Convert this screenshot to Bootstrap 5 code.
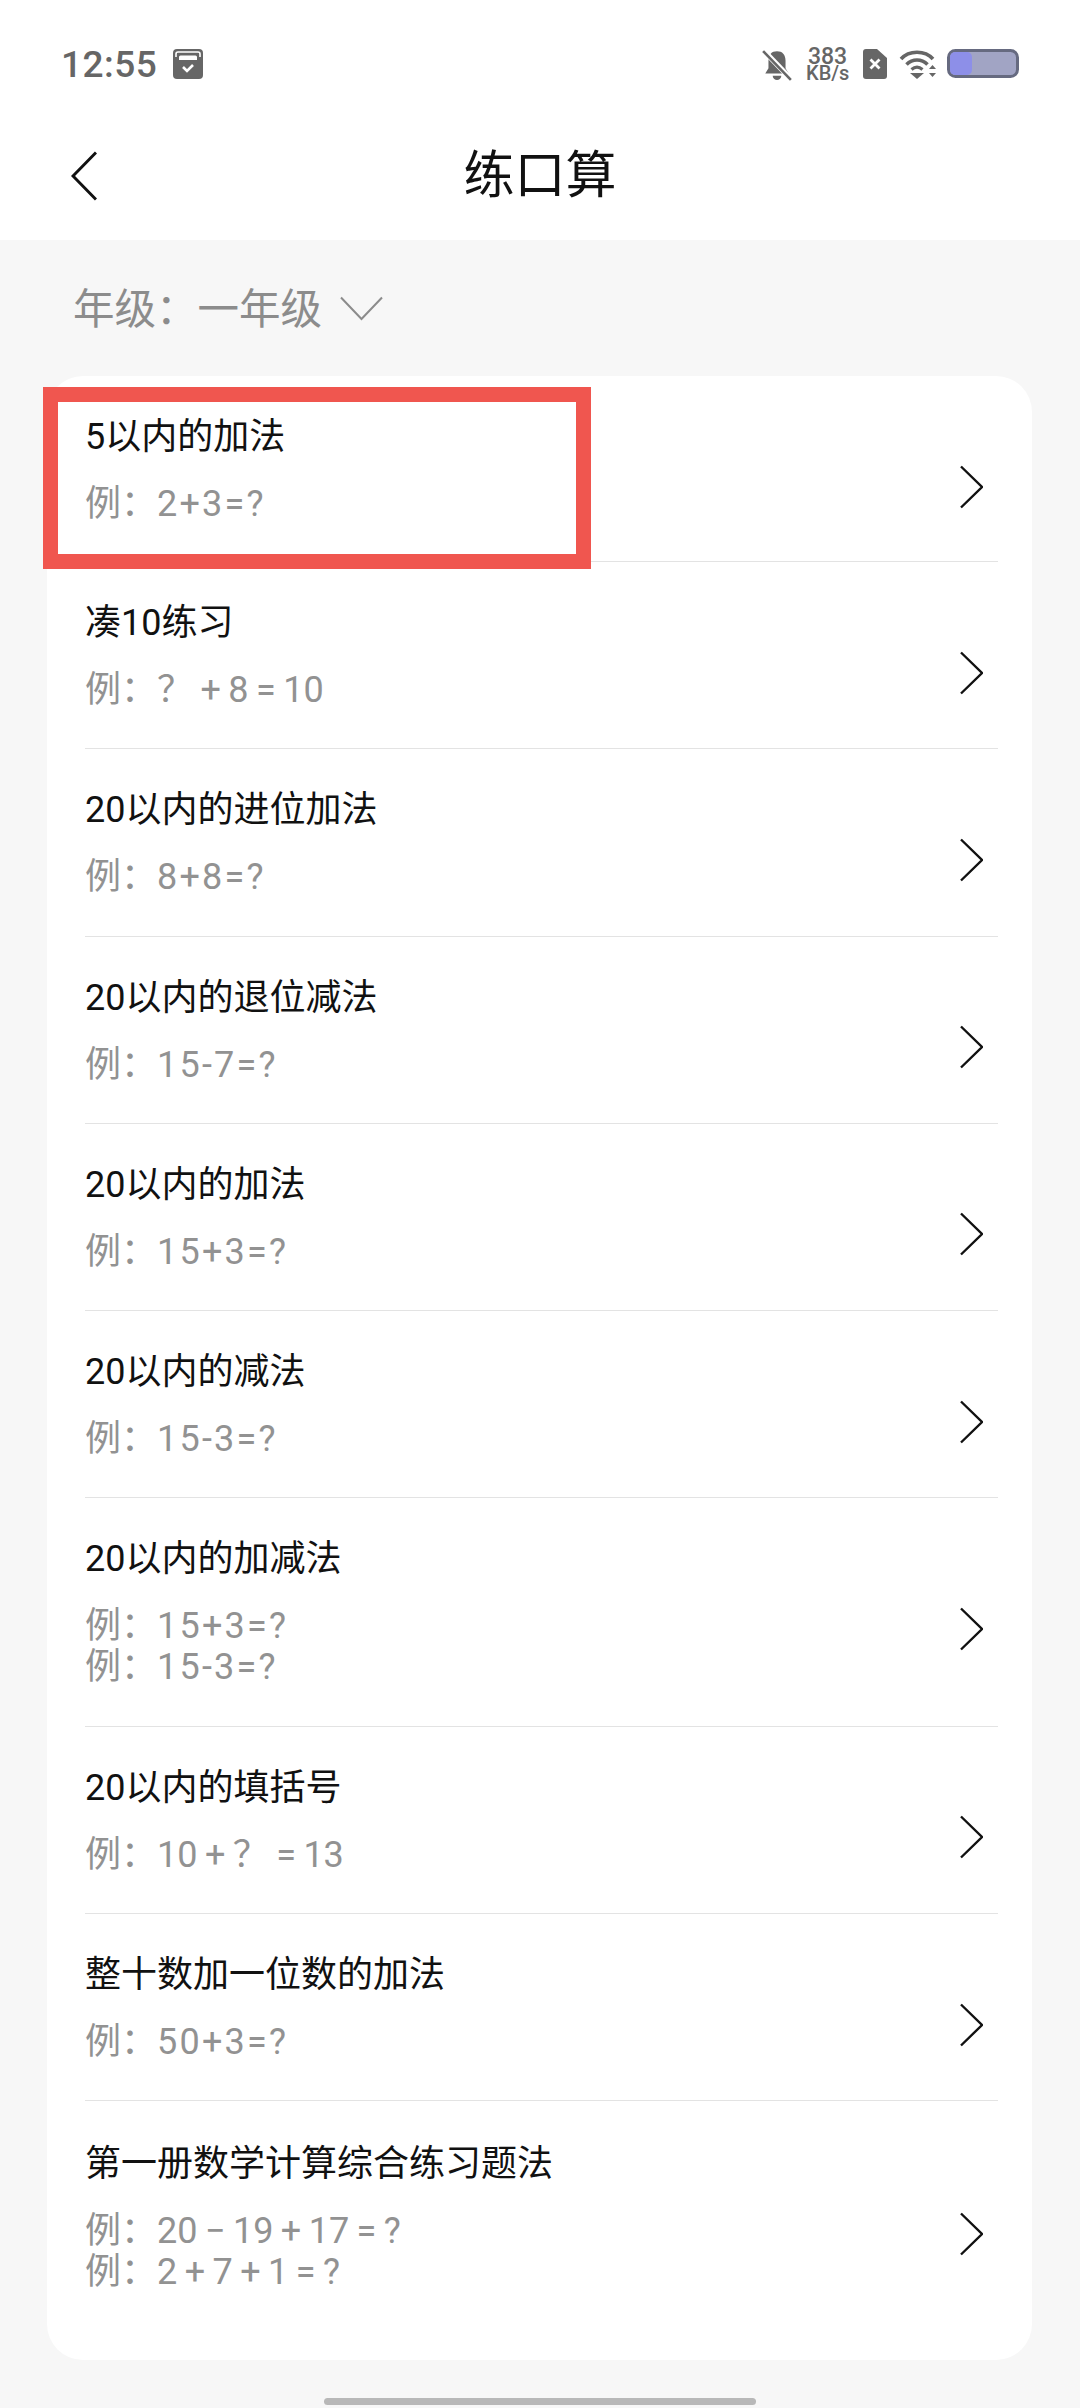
<!DOCTYPE html>
<html lang="zh">
<head>
  <meta charset="UTF-8">
  <meta name="viewport" content="width=device-width, initial-scale=1.0">
  <title>练口算</title>
  <link href="https://cdn.jsdelivr.net/npm/bootstrap@5.3.3/dist/css/bootstrap.min.css" rel="stylesheet">
  <style>
    body { width: 1080px; height: 2408px; overflow: hidden; background: #f7f7f7; font-family: Roboto, "Noto Sans CJK SC", sans-serif; }
    .top-area { height: 240px; background: #fff; }
    .status-row { height: 130px; padding: 49px 61px 0 61px; color: #666; }
    .clock { font-size: 37px; font-weight: 500; line-height: 32px; letter-spacing: .5px; }
    .speed { width: 43px; font-size: 20px; line-height: 17px; font-weight: 500; text-align: center; margin: -1px 14px 0 14px; white-space: nowrap; }
    .speed-top { font-size: 23px; }
    .wifi-icon { margin: 0 10px 0 12px; }
    .head-row { height: 90px; padding: 0 71px; margin-top: 1px; }
    .head-title { font-size: 51px; line-height: 60px; color: #111; }
    .head-side { width: 26px; }
    .grade-row { height: 136px; padding: 5px 0 0 73px; color: #8c8c8c; font-size: 41.5px; }
    .grade-arrow { margin: -4px 0 0 18px; }
    .practice-box { margin-left: 47px; width: 985px; height: 1984px; background: #fff; border-radius: 36px; }
    .practice-row { margin: 0 34px 0 38px; padding: 36px 15px 37.3px 0; border: 0; border-bottom: 1px solid #e3e3e3; border-radius: 0; background: transparent; }
    .practice-row:first-child { padding-bottom: 36px; }
    .practice-row:last-child { border-bottom: 0; padding-top: 38px; }
    .row-title { font-size: 36px; line-height: 50px; color: #111; }
    .row-sub { font-size: 36px; line-height: 41px; color: #929292; margin-top: 22px; }
    .row-sub .packed { letter-spacing: 2.2px; }
    .row-sub .spaced { word-spacing: -1.5px; }
    .row-arrow { margin-top: 36px; flex: none; }
    .red-frame { left: -4px; top: 11px; width: 548px; height: 182px; border: 15px solid #f0564f; }
    .home-bar { width: 432px; height: 7px; margin: 38px auto 0; background: #b8b8b8; border-radius: 4px; }
  </style>
</head>
<body>
  <!-- 顶部 -->
  <div class="top-area">
    <div class="status-row d-flex align-items-start">
      <span class="clock">12:55</span>
      <svg class="ms-3" width="30" height="30" viewBox="0 0 30 30">
        <rect x="0" y="0" width="30" height="30" rx="4" fill="#666"/>
        <path d="M3 8V5q0-2 2-2h20q2 0 2 2v3" fill="none" stroke="#fff" stroke-width="1.6"/>
        <path d="M6 11V8q0-1.500 1.500-1.500h15q1.500 0 1.500 1.500v3z" fill="#fff"/>
        <path d="M10 18l4 4 6-6" fill="none" stroke="#fff" stroke-width="2.600"/>
      </svg>
      <div class="ms-auto d-flex align-items-start">
        <svg width="30" height="32" viewBox="0 0 28 30">
          <path d="M14 2c-5 0-8 3-8 9v7l-3 5h22l-3-5v-7c0-6-3-9-8-9z" fill="#666"/>
          <path d="M10 25a4 4 0 0 0 8 0z" fill="#666"/>
          <path d="M1 1l26 27" stroke="#fff" stroke-width="5"/>
          <path d="M1 2l26 27" stroke="#666" stroke-width="2.400"/>
        </svg>
        <div class="speed"><div class="speed-top">383</div><div>KB/s</div></div>
        <svg width="24" height="30" viewBox="0 0 24 30">
          <path d="M3 0h11l10 9v18q0 3-3 3H3q-3 0-3-3V3q0-3 3-3z" fill="#666"/>
          <path d="M7.500 10.500l9 9M16.500 10.500l-9 9" stroke="#fff" stroke-width="2.800"/>
        </svg>
        <svg class="wifi-icon" width="38" height="30" viewBox="0 0 38 30">
          <path d="M2 10c8-9 24-9 32 0" fill="none" stroke="#666" stroke-width="3.600"/>
          <path d="M7.500 15.500c6-6 15-6 21 0" fill="none" stroke="#666" stroke-width="3.600"/>
          <path d="M12.500 20.500c3.500-3 7.500-3 11 0" fill="none" stroke="#666" stroke-width="3.200"/>
          <path d="M11 24h14l-7 6z" fill="#666"/>
          <path d="M30 20l3.500-4 3.500 4zM30 24h7l-3.500 4z" fill="#666"/>
        </svg>
        <svg width="72" height="30" viewBox="0 0 72 30">
          <rect x="1.500" y="1.500" width="69" height="26" rx="7" fill="#a1a4c4" stroke="#666a80" stroke-width="3"/>
          <rect x="3" y="3" width="22" height="23" rx="5" fill="#8d8fe8"/>
        </svg>
      </div>
    </div>
    <div class="head-row d-flex align-items-center justify-content-between">
      <svg class="head-side" width="26" height="50" viewBox="0 0 26 50">
        <path d="M25 1.500L2 25l23 23.500" fill="none" stroke="#111" stroke-width="3"/>
      </svg>
      <div class="head-title">练口算</div>
      <div class="head-side"></div>
    </div>
  </div>

  <!-- 年级 -->
  <div class="grade-row d-flex align-items-center">
    <span>年级：一年级</span>
    <svg class="grade-arrow" width="43" height="25" viewBox="0 0 43 25">
      <path d="M1 1.500L21.500 23 42 1.500" fill="none" stroke="#8c8c8c" stroke-width="2"/>
    </svg>
  </div>

  <!-- 列表 -->
  <div class="practice-box position-relative">
    <div id="rows" class="list-group"></div>
    <div class="red-frame position-absolute"></div>
  </div>
  <div class="home-bar"></div>

  <script>
    const items = [
      { t: '5以内的加法', s: ['2+3=?'] },
      { t: '凑10练习', s: ['？ + 8 = 10'] },
      { t: '20以内的进位加法', s: ['8+8=?'] },
      { t: '20以内的退位减法', s: ['15-7=?'] },
      { t: '20以内的加法', s: ['15+3=?'] },
      { t: '20以内的减法', s: ['15-3=?'] },
      { t: '20以内的加减法', s: ['15+3=?', '15-3=?'] },
      { t: '20以内的填括号', s: ['10 + ？ = 13'] },
      { t: '整十数加一位数的加法', s: ['50+3=?'] },
      { t: '第一册数学计算综合练习题法', s: ['20 − 19 + 17 = ?', '2 + 7 + 1 = ?'] }
    ];
    const subLine = f => `例：<span class="${f.includes(' ') ? 'spaced' : 'packed'}">${f}</span>`;
    document.getElementById('rows').innerHTML = items.map(i => `
      <div class="list-group-item practice-row d-flex align-items-center justify-content-between">
        <div>
          <div class="row-title">${i.t}</div>
          <div class="row-sub">${i.s.map(subLine).join('<br>')}</div>
        </div>
        <svg class="row-arrow" width="24" height="44" viewBox="0 0 24 44">
          <path d="M2 1.500L23 22 2 42.500" fill="none" stroke="#111" stroke-width="2.400"/>
        </svg>
      </div>`).join('');
  </script>
  <script src="https://cdn.jsdelivr.net/npm/bootstrap@5.3.3/dist/js/bootstrap.bundle.min.js"></script>
</body>
</html>
